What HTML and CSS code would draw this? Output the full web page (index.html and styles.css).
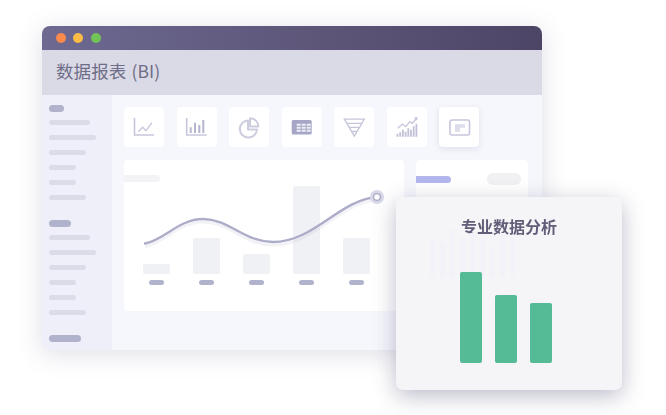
FILE: index.html
```html
<!DOCTYPE html>
<html lang="zh">
<head>
<meta charset="utf-8">
<title>数据报表 (BI)</title>
<link rel="stylesheet" href="styles.css">
</head>
<body>
<div class="stage">
  <div class="window">
    <div class="titlebar">
      <span class="dot dot-red"></span><span class="dot dot-yellow"></span><span class="dot dot-green"></span>
    </div>
    <div class="header">数据报表 (BI)</div>
    <div class="body">
      <aside class="sidebar">
        <div class="nav-group">
          <span class="nav-head w15"></span>
          <span class="nav-line w41"></span><span class="nav-line w47"></span><span class="nav-line w37"></span>
          <span class="nav-line w27"></span><span class="nav-line w27"></span><span class="nav-line w37"></span>
        </div>
        <div class="nav-group">
          <span class="nav-head w22"></span>
          <span class="nav-line w41"></span><span class="nav-line w47"></span><span class="nav-line w37"></span>
          <span class="nav-line w27"></span><span class="nav-line w27"></span><span class="nav-line w37"></span>
        </div>
        <div class="nav-group">
          <span class="nav-head w32"></span>
        </div>
      </aside>
      <main class="main">
        <div class="tiles">
          <div class="tile"><svg class="icon" viewBox="0 0 40 40"><path class="st" d="M10.5 11V28H30"/><path class="st thin" d="M14.3 24.7L18.7 20.3L22 23.7L28 15.7"/></svg></div>
          <div class="tile"><svg class="icon" viewBox="0 0 40 40"><path class="st" d="M9.7 11V28H29.7"/><path class="st dark" d="M13.7 26V20.3M18 26V15.7M22.3 26V18M26.3 26V13"/></svg></div>
          <div class="tile"><svg class="icon" viewBox="0 0 40 40"><path class="st wide" d="M19 13.4A8.6 8.6 0 1 0 28 22.4H19Z"/><path class="st wide" d="M21 11.2A8.4 8.4 0 0 1 29.4 19.6H21Z"/></svg></div>
          <div class="tile"><svg class="icon" viewBox="0 0 40 40"><rect class="fill-dark" x="9.7" y="13" width="20" height="14.5" rx="1.5"/><path class="cells" d="M14.7 16.8h4v2h-4zM19.7 16.8h4v2h-4zM24.7 16.8h4v2h-4zM14.7 19.8h4v2h-4zM19.7 19.8h4v2h-4zM24.7 19.8h4v2h-4zM14.7 22.8h4v2h-4zM19.7 22.8h4v2h-4zM24.7 22.8h4v2h-4z"/></svg></div>
          <div class="tile"><svg class="icon" viewBox="0 0 40 40"><path class="st thin" d="M10.3 12.2H30.3L20.3 29.2Z"/><path class="st thin" d="M12.8 16.3H27.8M15.3 20.4H25.3M17.5 24.5H23"/></svg></div>
          <div class="tile"><svg class="icon" viewBox="0 0 40 40"><path class="st thin" d="M10.7 21.3L15.3 17L18.7 19.7L23 14.7L25.3 16.3L29.7 11.3"/><path class="fill-mid" d="M27 10.6L30.4 10.2L30 13.6Z"/><path class="st bold" d="M10.5 29.7V26.7M13.2 29.7V25.2M15.9 29.7V22.7M18.6 29.7V24.7M21.3 29.7V21.2M24 29.7V22.7M26.7 29.7V19.2M29.4 29.7V16.7"/></svg></div>
          <div class="tile tile-active"><svg class="icon" viewBox="0 0 40 40"><rect class="st" x="11" y="13" width="19.5" height="15" rx="2"/><path class="fill-light" d="M16 17.3H26V20.7H21V24.7H16Z"/></svg></div>
        </div>
        <div class="panels">
          <section class="chart-card">
            <div class="chart-title"></div>
            <div class="bars">
              <div class="bar-item"><span class="bar h10"></span><span class="bar-label"></span></div>
              <div class="bar-item"><span class="bar h36"></span><span class="bar-label"></span></div>
              <div class="bar-item"><span class="bar h20"></span><span class="bar-label"></span></div>
              <div class="bar-item"><span class="bar h88"></span><span class="bar-label"></span></div>
              <div class="bar-item"><span class="bar h36"></span><span class="bar-label"></span></div>
            </div>
            <svg class="curve" viewBox="0 0 280 151">
              <path class="curve-shadow" d="M21 83.5C40 80 55 59 79 59C105 59 120 82 149 82C190 82 215 40 253 37"/>
              <path class="curve-line" d="M21 83.5C40 80 55 59 79 59C105 59 120 82 149 82C190 82 215 40 253 37"/>
              <circle class="ring" cx="253" cy="37" r="7"/>
              <circle class="ring-core" cx="253" cy="37" r="3.4"/>
            </svg>
          </section>
          <section class="side-card">
            <div class="side-head"><span class="side-bar"></span><span class="side-pill"></span></div>
          </section>
        </div>
      </main>
    </div>
  </div>

  <div class="float-card">
    <div class="float-title">专业数据分析</div>
    <div class="ghost-bars">
      <span class="ghost g40"></span><span class="ghost g34"></span><span class="ghost g47"></span><span class="ghost g40"></span>
      <span class="ghost g44"></span><span class="ghost g37"></span><span class="ghost g30"></span><span class="ghost g44"></span><span class="ghost g40"></span>
    </div>
    <div class="green-bars">
      <span class="green g91"></span><span class="green g68"></span><span class="green g60"></span>
    </div>
  </div>
</div>
</body>
</html>
```
FILE: styles.css
```css
* { box-sizing: border-box; }
html, body { margin: 0; padding: 0; background: #fff; }
.stage {
  position: relative;
  width: 666px;
  height: 415px;
  padding: 26px 0 0 42px;
  overflow: hidden;
  filter: blur(0.55px);
  font-family: "Noto Sans CJK SC", "Noto Sans", sans-serif;
}
.window {
  width: 500px;
  height: 324px;
  border-radius: 8px 8px 6px 6px;
  overflow: hidden;
  display: flex;
  flex-direction: column;
  background: #f6f7fc;
  box-shadow: 0 4px 26px rgba(95, 95, 135, 0.2), 0 0 0 1px rgba(255, 255, 255, 0.9);
}
.titlebar {
  height: 24px;
  flex: none;
  display: flex;
  align-items: center;
  gap: 7.5px;
  padding-left: 13.5px;
  background: linear-gradient(90deg, #6d6991, #5d5679 55%, #4d4566);
}
.dot { width: 10px; height: 10px; border-radius: 50%; }
.dot-red { background: #fb8a4c; }
.dot-yellow { background: #fcbc46; }
.dot-green { background: #71c455; }
.header {
  height: 45px;
  flex: none;
  padding-left: 14px;
  line-height: 42px;
  font-size: 17.5px;
  word-spacing: 1px;
  letter-spacing: 0.1px;
  color: #6f6d87;
  background: #dadae6;
}
.body { flex: 1; display: flex; min-height: 0; }
.sidebar {
  width: 70px;
  flex: none;
  padding: 10px 0 0 7px;
  display: flex;
  flex-direction: column;
  gap: 20px;
  background: #eeeff8;
}
.nav-group { display: flex; flex-direction: column; gap: 10px; }
.nav-head { height: 7px; border-radius: 4px; background: #b1b3cc; margin-bottom: -2px; }
.nav-line { height: 5px; border-radius: 3px; background: #dcdce8; }
.w15 { width: 15px; }
.w22 { width: 22px; }
.w27 { width: 27px; }
.w32 { width: 32px; }
.w37 { width: 37px; }
.w41 { width: 41px; }
.w47 { width: 47px; }
.main { flex: 1; padding: 12px 14px 0 12px; min-width: 0; }
.tiles { display: flex; gap: 12.5px; }
.tile {
  width: 40px;
  height: 40px;
  flex: none;
  border-radius: 4px;
  background: #fff;
}
.tile-active { box-shadow: 0 2px 6px rgba(120, 120, 160, 0.18); }
.icon { display: block; width: 40px; height: 40px; }
.st { fill: none; stroke: #c6c6db; stroke-width: 1.6; }
.thin { stroke-width: 1.3; }
.wide { stroke-width: 2; stroke: #cdcde0; stroke-linejoin: round; }
.bold { stroke-width: 1.8; stroke: #c0c1d8; }
.dark { stroke: #b4b5d0; stroke-width: 2; }
.fill-dark { fill: #a6a7c6; }
.fill-mid { fill: #bcbdd5; }
.fill-light { fill: #dcdcea; }
.cells { fill: #eeeef6; }
.panels { display: flex; gap: 12px; margin-top: 13px; }
.chart-card {
  position: relative;
  width: 280px;
  height: 151px;
  flex: none;
  padding-top: 15px;
  border-radius: 4px;
  background: #fff;
}
.chart-title { width: 36px; height: 7px; border-radius: 0 4px 4px 0; background: #f3f3f6; }
.bars {
  height: 99px;
  margin-top: 4px;
  padding-left: 19px;
  display: flex;
  align-items: flex-end;
  gap: 23px;
}
.bar-item { width: 27px; display: flex; flex-direction: column; align-items: center; gap: 6px; }
.bar { width: 27px; border-radius: 2px; background: #f0f1f5; }
.h10 { height: 10px; }
.h20 { height: 20px; }
.h36 { height: 36px; }
.h88 { height: 88px; }
.bar-label { width: 15px; height: 5px; border-radius: 3px; background: #b1b3cc; }
.curve { position: absolute; left: 0; top: 0; width: 280px; height: 151px; }
.curve-line { fill: none; stroke: #adadc9; stroke-width: 2.4; stroke-linecap: round; }
.curve-shadow { fill: none; stroke: rgba(170, 170, 200, 0.14); stroke-width: 3; transform: translateY(3px); }
.ring { fill: #d7d8e8; }
.ring-core { fill: #fff; stroke: #a9aac6; stroke-width: 1.4; }
.side-card {
  width: 112px;
  height: 151px;
  flex: none;
  padding-top: 13px;
  border-radius: 4px;
  background: #fff;
}
.side-head { display: flex; align-items: center; justify-content: space-between; padding-right: 7px; }
.side-bar { width: 35px; height: 7px; border-radius: 0 4px 4px 0; background: #b4b6ee; }
.side-pill { width: 34px; height: 12px; border-radius: 6px; background: #f1f1f3; }
.float-card {
  position: absolute;
  left: 396px;
  top: 197px;
  width: 226px;
  height: 193px;
  border-radius: 7px;
  background: #f5f5f7;
  box-shadow: 0 6px 22px rgba(75, 75, 115, 0.38);
}
.float-title {
  padding-top: 17px;
  text-align: center;
  font-size: 16px;
  font-weight: 700;
  line-height: 24px;
  color: #625e7a;
}
.ghost-bars {
  position: absolute;
  left: 34px;
  top: 33px;
  height: 47px;
  display: flex;
  align-items: flex-end;
  gap: 5.5px;
}
.ghost { width: 4.5px; background: #f2f2f8; }
.g30 { height: 30px; }
.g34 { height: 34px; }
.g37 { height: 37px; }
.g40 { height: 40px; }
.g44 { height: 44px; }
.g47 { height: 47px; }
.green-bars {
  position: absolute;
  left: 64px;
  bottom: 27px;
  display: flex;
  align-items: flex-end;
  gap: 13px;
}
.green { width: 22px; border-radius: 2px; background: #55ba96; }
.g91 { height: 91px; }
.g68 { height: 68px; }
.g60 { height: 60px; }
```
